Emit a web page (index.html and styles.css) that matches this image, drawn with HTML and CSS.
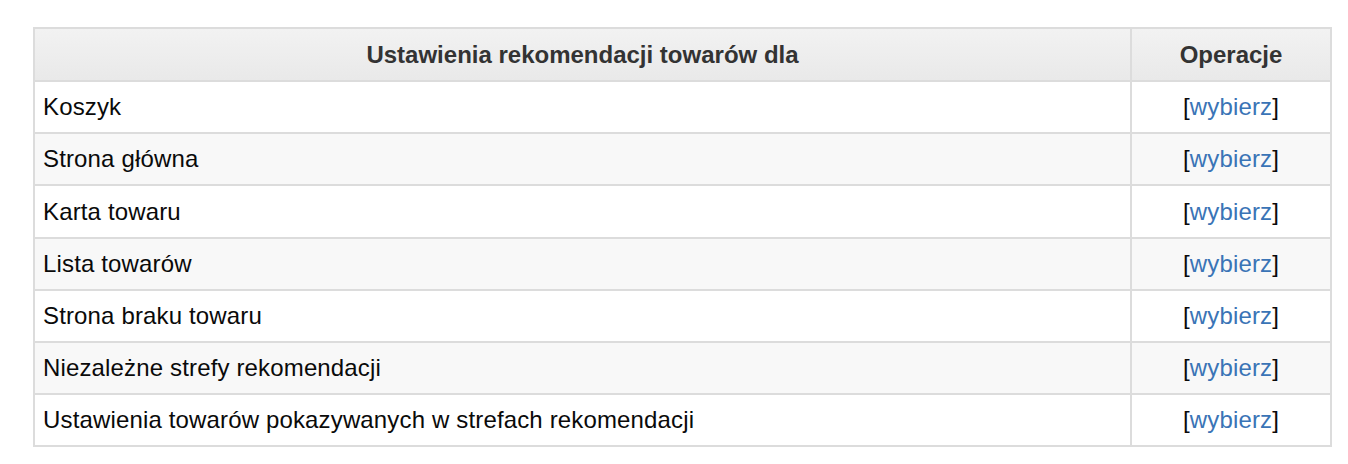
FILE: index.html
```html
<!DOCTYPE html>
<html lang="pl">
<head>
<meta charset="utf-8">
<title>Rekomendacje</title>
<link rel="stylesheet" href="styles.css">
</head>
<body>
<table class="grid">
  <thead>
    <tr>
      <th class="col-name">Ustawienia rekomendacji towarów dla</th>
      <th class="col-ops">Operacje</th>
    </tr>
  </thead>
  <tbody>
    <tr><td>Koszyk</td><td class="ops">[<a href="#">wybierz</a>]</td></tr>
    <tr><td>Strona główna</td><td class="ops">[<a href="#">wybierz</a>]</td></tr>
    <tr class="tall"><td>Karta towaru</td><td class="ops">[<a href="#">wybierz</a>]</td></tr>
    <tr><td>Lista towarów</td><td class="ops">[<a href="#">wybierz</a>]</td></tr>
    <tr><td>Strona braku towaru</td><td class="ops">[<a href="#">wybierz</a>]</td></tr>
    <tr><td>Niezależne strefy rekomendacji</td><td class="ops">[<a href="#">wybierz</a>]</td></tr>
    <tr><td>Ustawienia towarów pokazywanych w strefach rekomendacji</td><td class="ops">[<a href="#">wybierz</a>]</td></tr>
  </tbody>
</table>
</body>
</html>
```
FILE: styles.css
```css
html, body {
  margin: 0;
  background: #fff;
}
body {
  padding: 27px 16px 0 33px;
  font-family: "Liberation Sans", Arial, sans-serif;
  font-size: 24px;
  color: #0a0a0a;
}
.grid {
  width: 1299px;
  border-collapse: collapse;
  border: 2px solid #dcdcdc;
}
.grid th,
.grid td {
  border: 2px solid #dcdcdc;
  padding: 0 8px;
  height: 52px;
  box-sizing: border-box;
}
.grid td {
  letter-spacing: 0.15px;
}
.grid tr.tall td {
  height: 53px;
}
.grid th {
  height: 53px;
  font-weight: bold;
  color: #333;
  text-align: center;
  background: linear-gradient(#f2f2f2, #e9e9e9);
}
.col-ops {
  width: 200px;
}
.grid tbody tr:nth-child(even) td {
  background: #f8f8f8;
}
.ops {
  text-align: center;
}
.ops a {
  color: #3a74b6;
  text-decoration: none;
}
```
